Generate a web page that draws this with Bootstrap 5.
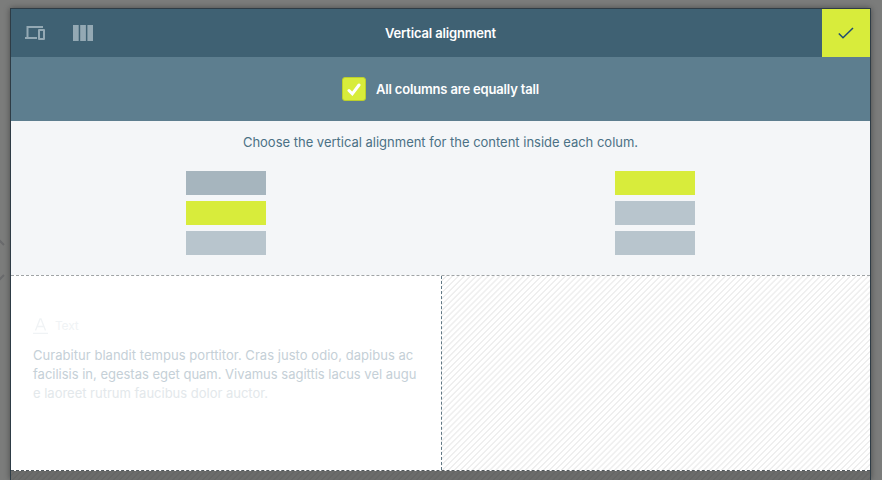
<!DOCTYPE html>
<html lang="en">
<head>
<meta charset="utf-8">
<title>Vertical alignment</title>
<meta name="viewport" content="width=device-width, initial-scale=1">
<link href="https://cdn.jsdelivr.net/npm/bootstrap@5.3.0/dist/css/bootstrap.min.css" rel="stylesheet">
<style>
body{background:#7b7c7b;font-family:Inter,"Liberation Sans",sans-serif;font-size:13px;height:480px}
.editor-shell{padding:8px 11px 0 10px;height:480px}
.editor{height:472px;border:1px solid #2e3c46;border-bottom:0;box-shadow:0 0 6px rgba(0,0,0,.4);background:#696a69}
.topbar{height:48px;background:#3f6173}
.tool-icons{left:14px;gap:27px;color:#94a9b4}
.confirm{width:48px;height:48px;background:#d8ec3b;color:#1f4c73}
.title-text{font-weight:600;color:#fff;font-size:13px;letter-spacing:-.17px;padding-top:1px}
.option{height:64px;background:#5d7e8f;gap:10px}
.tick{width:24px;height:24px;background:#d8ec3b;border:1px solid #bccf2b;border-radius:3px}
.chooser{height:154px;background:#f4f6f8;color:#4b7185}
.hint{padding-top:12px;line-height:19px;font-size:13px;letter-spacing:-.01px}
.stacks{padding-top:19px}
.stack{gap:6px}
.bar{width:80px;height:24px;background:#b8c5cd}
.bar.dim{background:#a6b5be}
.bar.on{background:#d8ec3b}
.columns{height:196px;background:#fff;border-top:1px dashed #a0a4a6;border-bottom:1px dashed #50575b}
.text-col{width:430px;padding:40px 0 0 22px;color:#c5d0d7}
.label-row{height:20px;gap:7px;color:#f0f3f5;font-size:12px;letter-spacing:-.2px}
.copy{margin-top:10px;font-size:13px;line-height:19px}
.copy .l1{letter-spacing:.04px}
.copy .l2,.copy .l3{letter-spacing:-.01px}
.copy .faded{color:#e3e8eb}
.empty-col{border-left:1px dashed #607784;background:repeating-linear-gradient(135deg,#fff 0 2.200px,#efefef 2.700px 3.700px,#fff 4.200px)}
.below{background:repeating-linear-gradient(135deg,#6b6c6b 0 2.200px,#666766 2.700px 3.700px,#6b6c6b 4.200px)}
.edge-mark{left:0;top:238px}
</style>
</head>
<body class="overflow-hidden position-relative">
<svg class="edge-mark position-absolute" width="8" height="44" fill="none" stroke="#696a6c" stroke-width="2"><path d="M-2 1l6 6M-2 43l6-6"/></svg>
<div class="editor-shell">
<main class="editor d-flex flex-column position-relative">
<header class="topbar position-relative d-flex align-items-center justify-content-center flex-shrink-0">
<div class="tool-icons position-absolute d-flex align-items-center">
<svg width="21" height="16" fill="currentColor"><path d="M1.500 1h16.500v2H3.500v9H12v2H0v-2h1.500zM14 4h5q1 0 1 1v9q0 1-1 1h-5q-1 0-1-1V5q0-1 1-1zm1 2v7h3V6z" fill-rule="evenodd"/></svg>
<svg width="20" height="16" fill="currentColor"><path d="M0 0h5.7v16H0zM7.2 0h5.7v16H7.200zM14.400 0h5.700v16h-5.700z"/></svg>
</div>
<span class="title-text">Vertical alignment</span>
<button class="confirm btn border-0 rounded-0 p-0 position-absolute end-0 top-0 d-flex align-items-center justify-content-center" aria-label="Apply"><svg width="16" height="12" fill="none" stroke="currentColor" stroke-width="1.5"><path d="M.8 6.500l4.200 4.200L15 1"/></svg></button>
</header>
<section class="option d-flex align-items-center justify-content-center flex-shrink-0">
<span class="tick d-flex align-items-center justify-content-center"><svg width="14" height="13" fill="none" stroke="#fff" stroke-width="3" stroke-linecap="round"><path d="M2 7.500l3.300 3.300L12 2"/></svg></span>
<span class="title-text">All columns are equally tall</span>
</section>
<section class="chooser flex-shrink-0">
<p class="hint text-center mb-0">Choose the vertical alignment for the content inside each colum.</p>
<div class="stacks row g-0">
<div class="col d-flex justify-content-center"><div class="stack d-flex flex-column"><div class="bar dim"></div><div class="bar on"></div><div class="bar"></div></div></div>
<div class="col d-flex justify-content-center"><div class="stack d-flex flex-column"><div class="bar on"></div><div class="bar"></div><div class="bar"></div></div></div>
</div>
</section>
<section class="columns d-flex flex-shrink-0">
<div class="text-col flex-shrink-0">
<div class="label-row d-flex align-items-center"><svg width="15" height="16" fill="none" stroke="currentColor" stroke-width="1.300"><path d="M2.500 12.500L7 1h1l4.500 11.500M4.500 8.500h6M0 15.300h15"/></svg><span>Text</span></div>
<div class="copy text-nowrap"><span class="l1">Curabitur blandit tempus porttitor. Cras justo odio, dapibus ac</span><br><span class="l2">facilisis in, egestas eget quam. Vivamus sagittis lacus vel augu</span><br><span class="l3 faded">e laoreet rutrum faucibus dolor auctor.</span></div>
</div>
<div class="empty-col flex-grow-1"></div>
</section>
<div class="below flex-grow-1"></div>
</main>
</div>
<script src="https://cdn.jsdelivr.net/npm/bootstrap@5.3.0/dist/js/bootstrap.bundle.min.js"></script>
</body>
</html>
